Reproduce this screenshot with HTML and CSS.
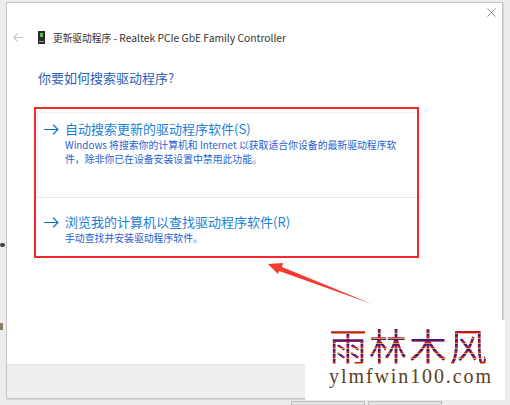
FILE: index.html
```html
<!DOCTYPE html>
<html lang="zh-CN">
<head>
	<meta charset="UTF-8">
	<title>更新驱动程序</title>
	<link rel="stylesheet" href="styles.css">
</head>
<body>

	<div class="window">

		<!-- Close button -->
		<div class="titlebar">
			<svg class="close" width="9" height="9" viewBox="0 0 9 9"><path d="M0.5 0.5L8.5 8.5M8.5 0.5L0.5 8.5" stroke="#8a8a8a" fill="none"/></svg>
		</div>

		<!-- Back arrow and dialog title -->
		<div class="nav">
			<svg class="back" width="10" height="9" viewBox="0 0 10 9"><path d="M0.5 4.5H10M4.5 0.6L0.8 4.5L4.5 8.4" stroke="#c4c4c4" stroke-width="1.2" fill="none"/></svg>
			<svg class="nic" width="7" height="13" viewBox="0 0 7 13"><rect width="7" height="13" fill="#2b2b2b"/><rect x="2" y="2" width="3" height="4" fill="#54c25a"/><rect x="1" y="10" width="5" height="1" fill="#9a9a9a"/></svg>
			<span class="nav-title"><span class="nav-cn">更新驱动程序</span> - Realtek PCIe GbE Family Controller</span>
		</div>

		<h1 class="heading">你要如何搜索驱动程序?</h1>

		<div class="options">
			<div class="option option-first">
				<svg class="arrow" width="15" height="11" viewBox="0 0 15 11"><path d="M0 5.5H14M9 0.8L14 5.5L9 10.2" stroke="#0f72c8" stroke-width="1.2" fill="none"/></svg>
				<div>
					<div class="option-title">自动搜索更新的驱动程序软件(S)</div>
					<p class="option-text">Windows 将搜索你的计算机和 Internet 以获取适合你设备的最新驱动程序软<br>件，除非你已在设备安装设置中禁用此功能。</p>
				</div>
			</div>
			<div class="option option-second">
				<svg class="arrow" width="15" height="11" viewBox="0 0 15 11"><path d="M0 5.5H14M9 0.8L14 5.5L9 10.2" stroke="#0f72c8" stroke-width="1.2" fill="none"/></svg>
				<div>
					<div class="option-title">浏览我的计算机以查找驱动程序软件(R)</div>
					<p class="option-text">手动查找并安装驱动程序软件。</p>
				</div>
			</div>
		</div>

		<div class="spacer"></div>
		<div class="footer"></div>
	</div>

	<!-- Marks pasted over the screenshot -->
	<div class="redbox"></div>
	<svg class="pointer" width="110" height="46" viewBox="0 0 110 46"><path d="M0 1L15 0L14 4L104 41L11 8L10 11Z" fill="#f4392f"/></svg>

	<div class="stray stray-a"></div>
	<div class="stray stray-b"></div>

	<div class="watermark">
		<div class="wm-cn">雨林木风</div>
		<div class="wm-en">ylmfwin100.com</div>
	</div>

	<div class="taskbtn taskbtn-a"></div>
	<div class="taskbtn taskbtn-b"></div>

</body>
</html>
```

FILE: styles.css
```css
body {
	margin: 0;
	width: 510px;
	height: 405px;
	overflow: hidden;
	position: relative;
	background-color: #ececec;
	font-family: "Noto Sans CJK SC", "Liberation Sans", sans-serif;
}

.window {
	margin: 2px 0 0 6px;
	width: 495px;
	height: 395px;
	display: flex;
	flex-direction: column;
	background-color: #fff;
	border: 1px solid #c4c4c4;
	box-shadow: 1px 1px 0 #d6d6d6;
}

.titlebar {
	height: 21px;
	display: flex;
	justify-content: flex-end;
	padding: 5px 6px 0 0;
}

.nav {
	display: flex;
	align-items: center;
	height: 16px;
	padding-left: 6px;
}

.back {
	margin-right: 15px;
}

.nic {
	margin-right: 8px;
}

.nav-title {
	font-size: 10.3px;
	color: #333;
	white-space: nowrap;
}

.nav-cn {
	font-size: 9.7px;
}

.heading {
	margin: 23px 0 0 31px;
	font-size: 13px;
	line-height: 20px;
	font-weight: normal;
	color: #2a62b8;
}

.options {
	margin: 24px 0 0 30px;
}

.option {
	display: flex;
	align-items: flex-start;
	padding-left: 6px;
}

.option-first {
	width: 385px;
	height: 86px;
	padding-top: 6px;
	box-sizing: border-box;
	border: 1px solid #efefef;
	border-bottom-color: #e8e8e8;
}

.option-second {
	padding-left: 7px;
	padding-top: 14px;
}

.arrow {
	margin: 5px 6px 0 0;
}

.option-title {
	font-size: 13px;
	line-height: 20px;
	color: #1c7fd6;
	white-space: nowrap;
}

.option-text {
	margin: -1px 0 0;
	font-size: 9.85px;
	line-height: 14px;
	color: #1f5fd0;
	white-space: nowrap;
}

.spacer {
	flex: 1;
}

.footer {
	height: 33px;
	background-color: #efefef;
	border-top: 1px solid #e6e6e6;
}

.redbox {
	position: absolute;
	left: 34px;
	top: 107px;
	width: 381px;
	height: 147px;
	border: 2px solid #f4282c;
}

.pointer {
	position: absolute;
	left: 268px;
	top: 263px;
}

.stray {
	position: absolute;
	left: 0;
	width: 5px;
	background-color: #444;
}

.stray-a {
	top: 243px;
	height: 4px;
	border-radius: 2px;
}

.stray-b {
	top: 323px;
	height: 7px;
	width: 3px;
	background-color: #8a8060;
}

.watermark {
	position: absolute;
	left: 305px;
	top: 320px;
	width: 200px;
	height: 80px;
	background-color: #fff;
	text-align: center;
}

.wm-cn {
	margin: 6px 0 0 8px;
	font-size: 38px;
	line-height: 38px;
	letter-spacing: 2px;
	color: transparent;
	background-image: repeating-linear-gradient(180deg, #c3123e 0, #c3123e 2px, #d9a030 2px, #d9a030 3px, #35207f 3px, #35207f 5px);
	-webkit-background-clip: text;
	background-clip: text;
}

.wm-en {
	margin: 1px 0 0 12px;
	font-family: "Liberation Serif", serif;
	font-size: 20px;
	line-height: 22px;
	letter-spacing: 1.9px;
	color: #5a4020;
	white-space: nowrap;
}

.taskbtn {
	position: absolute;
	top: 401px;
	height: 4px;
	background-color: #e2e2e2;
	border: 1px solid #bdbdbd;
	border-bottom: none;
	box-sizing: border-box;
}

.taskbtn-a {
	left: 291px;
	width: 74px;
}

.taskbtn-b {
	left: 368px;
	width: 74px;
}
```
